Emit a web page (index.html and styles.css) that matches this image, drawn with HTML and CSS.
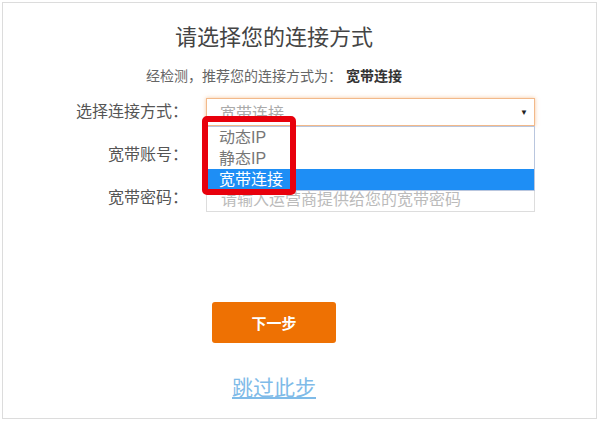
FILE: index.html
```html
<!DOCTYPE html>
<html lang="zh-CN">
<head>
<meta charset="utf-8">
<title>请选择您的连接方式</title>
<link rel="stylesheet" href="styles.css">
</head>
<body>
<div class="frame">
  <div class="main">
    <h1 class="title">请选择您的连接方式</h1>
    <p class="subtitle">经检测，推荐您的连接方式为： <b>宽带连接</b></p>
  </div>
  <div class="form">
    <div class="row">
      <span class="label">选择连接方式：</span>
      <div class="select">
        <span class="select-value">宽带连接</span>
        <span class="arrow">&#9660;</span>
        <ul class="dropdown">
          <li class="option">动态IP</li>
          <li class="option">静态IP</li>
          <li class="option selected">宽带连接</li>
        </ul>
        <div class="highlight"></div>
      </div>
    </div>
    <div class="row">
      <span class="label">宽带账号：</span>
      <div class="input"></div>
    </div>
    <div class="row">
      <span class="label">宽带密码：</span>
      <div class="input"><span class="placeholder">请输入运营商提供给您的宽带密码</span></div>
    </div>
  </div>
  <div class="main actions">
    <button class="btn">下一步</button>
    <a class="skip" href="#">跳过此步</a>
  </div>
</div>
</body>
</html>
```

FILE: styles.css
```css
* { box-sizing: border-box; }
html, body { margin: 0; padding: 0; background: #fff; }
body {
  font-family: "Liberation Sans", "Noto Sans CJK SC", sans-serif;
  color: #555;
}
.frame {
  margin: 2px 0 0 2px;
  width: 595px;
  height: 417px;
  border: 1px solid #dcdcdc;
}
.main {
  width: 542px;
  display: flex;
  flex-direction: column;
  align-items: center;
}
.title {
  margin: 20px 0 0;
  font-size: 22px;
  line-height: 30px;
  font-weight: normal;
  color: #444;
}
.subtitle {
  margin: 13px 0 0;
  font-size: 14px;
  line-height: 20px;
  color: #666;
}
.subtitle b { color: #333; }
.form {
  margin-top: 12px;
  padding-left: 65px;
  display: flex;
  flex-direction: column;
  gap: 15px;
}
.row {
  display: flex;
  align-items: center;
  height: 28px;
}
.label {
  width: 120px;
  margin-right: 18px;
  text-align: right;
  font-size: 16px;
  line-height: 28px;
  color: #555;
}
.select {
  position: relative;
  width: 329px;
  height: 28px;
  border: 1px solid #f2b98a;
  box-shadow: 0 0 4px rgba(240, 150, 70, 0.55);
  display: flex;
  align-items: center;
  justify-content: space-between;
  padding: 0 6px 0 13px;
  background: #fff;
}
.select-value { font-size: 16px; color: #aaa; }
.arrow { font-size: 8px; color: #222; }
.dropdown {
  position: absolute;
  top: 27px;
  left: -1px;
  width: 329px;
  margin: 0;
  padding: 0;
  list-style: none;
  background: #fff;
  border: 1px solid #b9c6de;
  z-index: 2;
}
.option {
  height: 21px;
  line-height: 21px;
  padding-left: 12px;
  font-size: 16px;
  color: #777;
}
.option.selected { background: #1e8ef5; color: #fff; }
.highlight {
  position: absolute;
  left: -5px;
  top: 17px;
  width: 94px;
  height: 79px;
  border: 6px solid #e8000c;
  border-radius: 5px;
  z-index: 3;
}
.input {
  width: 329px;
  height: 28px;
  border: 1px solid #ddd;
  display: flex;
  align-items: center;
  padding-left: 14px;
}
.placeholder { font-size: 16px; color: #bbb; }
.actions { margin-top: 90px; }
.btn {
  width: 124px;
  height: 41px;
  border: none;
  border-radius: 3px;
  background: #ee7103;
  color: #fff;
  font-family: "Noto Sans CJK SC", sans-serif;
  font-size: 15px;
  font-weight: bold;
}
.skip {
  margin-top: 33px;
  font-size: 21px;
  line-height: 24px;
  color: #7fbbe8;
  text-decoration: underline;
}
```
